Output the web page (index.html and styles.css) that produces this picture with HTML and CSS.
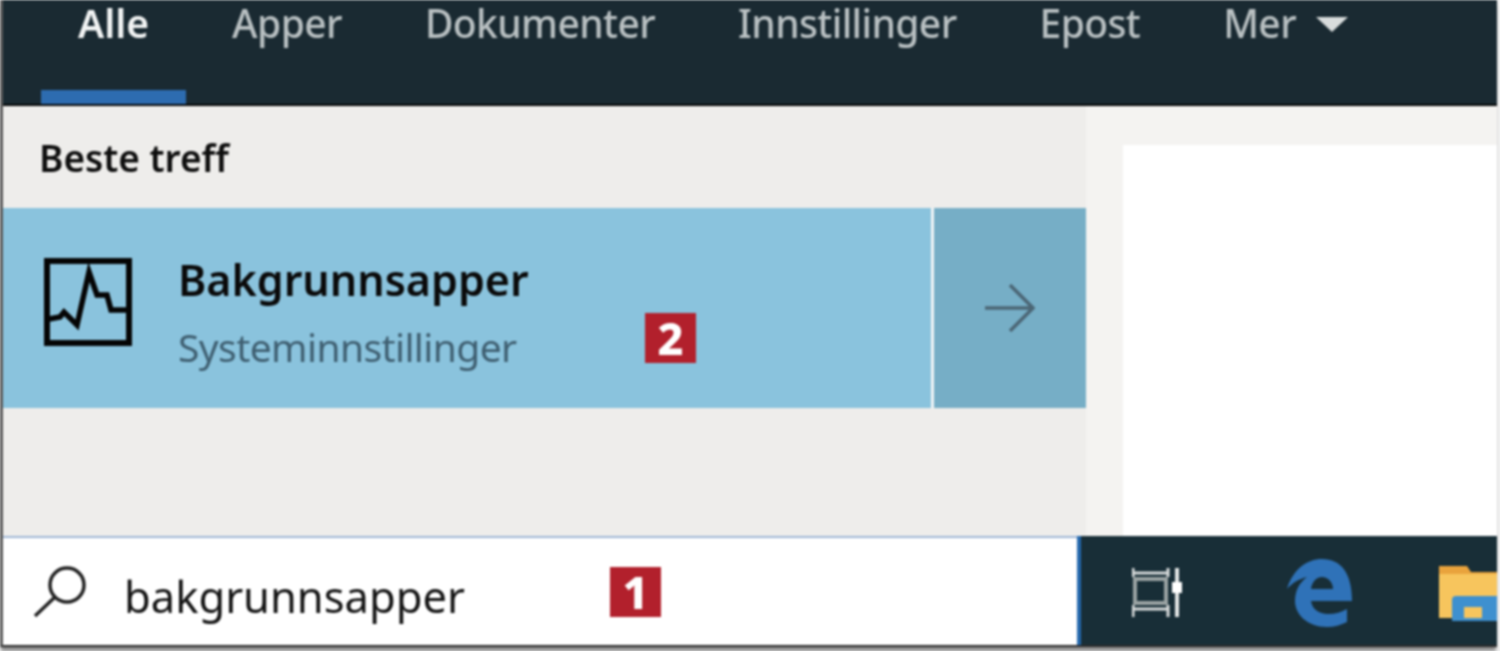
FILE: index.html
```html
<!DOCTYPE html>
<html lang="en">
<head>
    <meta charset="UTF-8">
    <meta name="viewport" content="width=device-width, initial-scale=1.0">
    <title>Bakgrunnsapper</title>
    <link rel="stylesheet" href="styles.css">
</head>
<body>

<div class="window">
    <nav class="tabs">
        <a class="tab active">Alle</a>
        <a class="tab">Apper</a>
        <a class="tab">Dokumenter</a>
        <a class="tab">Innstillinger</a>
        <a class="tab">Epost</a>
        <a class="tab">Mer <span class="caret"></span></a>
    </nav>

    <div class="panel">
        <section class="results">
            <h2 class="results-title">Beste treff</h2>
            <div class="hit">
                <div class="hit-main">
                    <svg class="hit-icon" viewBox="0 0 88 88" width="88" height="88" fill="none" stroke="#050505">
                        <rect x="3" y="3" width="82" height="82" stroke-width="6"/>
                        <polyline points="5,61 16,59 20,54 33,67 45,14 53,37 63,37 67,52 83,52" stroke-width="5.5"/>
                    </svg>
                    <div class="hit-text">
                        <div class="hit-name">Bakgrunnsapper</div>
                        <div class="hit-type">Systeminnstillinger</div>
                    </div>
                    <span class="badge badge-two">2</span>
                </div>
                <div class="hit-open">
                    <svg viewBox="0 0 50 48" width="50" height="48" fill="none" stroke="#4b6675" stroke-width="3.5">
                        <path d="M0 24H48M25 1L48 24L25 47"/>
                    </svg>
                </div>
            </div>
        </section>
        <aside class="preview">
            <div class="preview-sheet"></div>
        </aside>
    </div>

    <div class="bottom">
        <div class="searchbox">
            <svg class="search-icon" viewBox="0 0 54 54" width="54" height="54" fill="none" stroke="#222" stroke-width="3.5">
                <circle cx="34" cy="20" r="17"/>
                <path d="M22 32L2 51"/>
            </svg>
            <span class="search-text">bakgrunnsapper</span>
            <span class="badge badge-one">1</span>
        </div>
        <div class="taskbar">
            <svg class="task-view" viewBox="0 0 50 50" width="50" height="50" fill="none">
                <path d="M1 5H36M1 41H36M1 0V9M36 0V9M1 37V49M36 37V49" stroke="#d8dcdc" stroke-width="3"/>
                <rect x="3" y="11" width="31" height="24" stroke="#9aa3a3" stroke-width="4"/>
                <path d="M45 0V49" stroke="#e4e6e6" stroke-width="4"/>
                <rect x="40" y="14" width="10" height="11" fill="#fff"/>
            </svg>
            <svg class="edge" viewBox="0 0 65 68" width="65" height="68">
                <path fill="#2f72b8" fill-rule="evenodd" d="M0 30C6 10 20 0 35 0C54 0 65 14 65 42H24C25 50 32 55 41 55C48 55 55 53 60 50V63C54 66 47 68 40 68C20 68 8 55 8 42C8 32 12 24 20 18C12 20 5 24 0 30ZM24 30H46C46 23 41 18 35 18C29 18 25 23 24 30Z"/>
            </svg>
            <svg class="folder" viewBox="0 0 58 55" width="58" height="55">
                <path fill="#e9a33c" d="M0 0H28L32 6H58V14H0Z"/>
                <path fill="#f7c55d" d="M0 8H58V52H0Z"/>
                <path fill="#3e90cf" d="M13 34Q13 30 17 30H58V55H13Z"/>
                <rect x="25" y="41" width="18" height="11" fill="#f7c55d"/>
            </svg>
        </div>
    </div>
</div>

</body>
</html>
```

FILE: styles.css
```css
html, body {
    margin: 0;
    height: 100%;
    overflow: hidden;
    background-color: #f2f2f2;
}
.window {
    display: flex;
    flex-direction: column;
    position: relative;
    width: 1494px;
    height: 645px;
    border-left: 3px solid #5c5c5c;
    border-bottom: 2px solid #2c2c2c;
    box-shadow: 0 5px 3px -1px #8a8a8a;
    font-family: 'Noto Sans', 'Open Sans', sans-serif;
    filter: blur(0.9px);
}
.tabs {
    display: flex;
    gap: 9px;
    height: 106px;
    padding-left: 38px;
    box-sizing: border-box;
    background-color: #1a2a32;
    border-bottom: 2px solid #040606;
    flex: none;
}
.tab {
    display: flex;
    align-items: flex-start;
    padding: 0 37px;
    color: #b9c0c2;
    font-size: 39px;
    line-height: 46px;
    font-weight: 500;
    letter-spacing: -0.6px;
    white-space: pre;
    border-bottom: 14px solid transparent;
}
.tab.active {
    color: #f2f4f4;
    font-weight: 600;
    letter-spacing: 0;
    border-bottom-color: #2d6cb0;
}
.caret {
    width: 0;
    height: 0;
    margin: 17px 0 0 10px;
    border-left: 16px solid transparent;
    border-right: 16px solid transparent;
    border-top: 15px solid #d8dcdc;
}
.panel {
    display: flex;
    flex: 1;
    min-height: 0;
}
.results {
    width: 1083px;
    background-color: #eeedeb;
}
.results-title {
    margin: 0;
    height: 102px;
    padding: 30px 0 0 36px;
    box-sizing: border-box;
    color: #0e0e0e;
    font-size: 37px;
    line-height: 44px;
    font-weight: 600;
}
.hit {
    display: flex;
    height: 200px;
}
.hit-main {
    display: flex;
    flex: 1;
    padding-left: 41px;
    align-items: center;
    gap: 46px;
    background-color: #8ac3dd;
    border-right: 3px solid #f1f5f6;
}
.hit-icon {
    margin-bottom: 12px;
}
.hit-text {
    padding-top: 10px;
}
.hit-name {
    color: #0a0a0a;
    font-size: 43px;
    line-height: 50px;
    font-weight: 600;
}
.hit-type {
    margin-top: 18px;
    color: #3f5f71;
    font-size: 39px;
    line-height: 48px;
    letter-spacing: -0.6px;
}
.hit-open {
    display: flex;
    align-items: center;
    justify-content: center;
    width: 152px;
    background-color: #76aec6;
}
.preview {
    flex: 1;
    padding: 39px 0 0 37px;
    background-color: #f4f3f1;
}
.preview-sheet {
    height: 100%;
    background-color: #fff;
}
.bottom {
    display: flex;
    height: 109px;
    flex: none;
}
.searchbox {
    display: flex;
    align-items: center;
    gap: 37px;
    width: 1074px;
    padding-left: 30px;
    box-sizing: border-box;
    background-color: #fff;
    border-top: 2px solid #9fb7d6;
}
.search-text {
    padding-top: 8px;
    color: #141414;
    font-size: 43.5px;
    line-height: 50px;
}
.taskbar {
    display: flex;
    align-items: center;
    flex: 1;
    padding: 5px 0 0 51px;
    overflow: hidden;
    background-color: #182e37;
    border-left: 4px solid #2468ad;
}
.task-view {
    flex: none;
}
.edge {
    flex: none;
    margin-left: 105px;
}
.folder {
    flex: none;
    margin-left: 87px;
}
.badge {
    position: absolute;
    width: 51px;
    height: 50px;
    background-color: #b2202c;
    color: #fff;
    font-size: 45px;
    line-height: 50px;
    font-weight: 800;
    text-align: center;
}
.badge-two {
    left: 642px;
    top: 313px;
}
.badge-one {
    left: 607px;
    top: 567px;
}
```
